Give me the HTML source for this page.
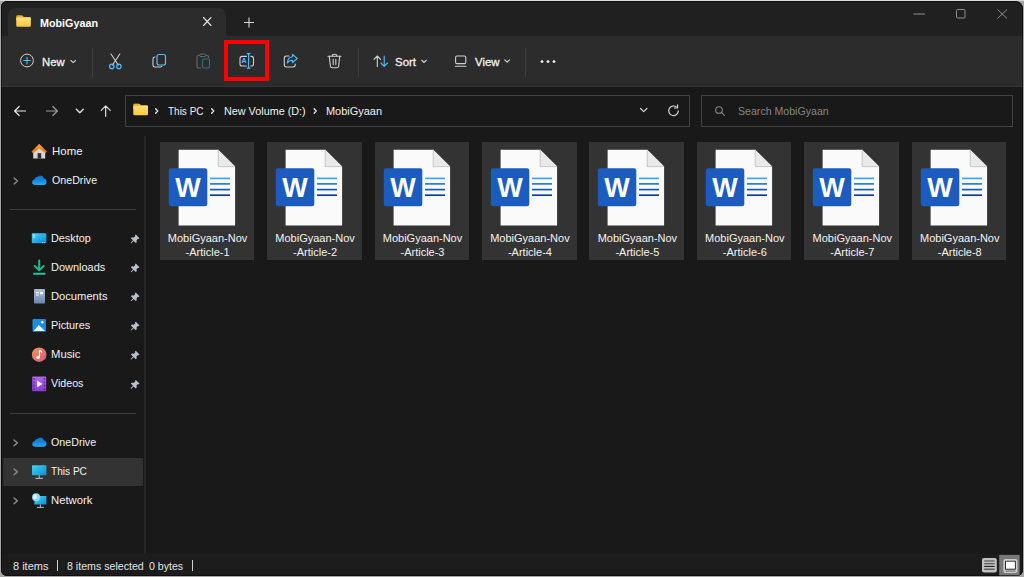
<!DOCTYPE html>
<html lang="en">
<head>
<meta charset="utf-8">
<title>MobiGyaan - File Explorer</title>
<style>
html,body{margin:0;padding:0;}
body{width:1024px;height:577px;overflow:hidden;background:#a6a6a6;position:relative;
 font-family:"Liberation Sans",sans-serif;font-size:11px;color:#f0f0f0;}
*{box-sizing:border-box;}
.a{position:absolute;}
.t{position:absolute;white-space:nowrap;line-height:14px;height:14px;}
#win{left:1.15px;top:1px;width:1021.6px;height:574.8px;background:#191919;border-radius:6px 8px 6px 6px;overflow:hidden;}
#winborder{left:0;top:0;width:100%;height:100%;border:1px solid rgba(0,0,0,0.5);border-radius:6px 8px 6px 6px;}
#topstrip{left:0;top:0;width:1024px;height:1px;background:#dadada;}
#titlebar{left:0;top:0;width:1022px;height:35px;background:#202020;}
#tab{left:7px;top:7px;width:218px;height:28px;background:#2c2c2c;border-radius:7px 7px 0 0;}
#toolbar{left:0;top:35px;width:1022px;height:51px;background:#2c2c2c;border-bottom:1px solid #343434;}
#status{left:0;top:552.5px;width:1022px;height:22px;background:#1c1c1c;}
.sep{position:absolute;background:#3e3e3e;width:1px;}
.item{position:absolute;top:142px;width:94.6px;height:118px;background:#333333;}
.item .l1,.item .l2{position:absolute;left:0;width:96px;text-align:center;line-height:14px;height:14px;font-size:11px;color:#f4f4f4;white-space:nowrap;}
.item .l1{top:88.7px;}
.item .l2{top:102.7px;}
.nav{position:absolute;left:50px;font-size:11px;line-height:14px;height:14px;white-space:nowrap;color:#f2f2f2;}
</style>
</head>
<body>
<div class="a" id="topstrip"></div>
<div class="a" id="win">
  <div class="a" id="titlebar"></div>
  <div class="a" id="tab"></div>
  <div class="a" id="toolbar"></div>
  <div class="a" id="status"></div>
  <div class="a" id="winborder"></div>
</div>

<div class="a" id="ui" style="left:0;top:0;width:1024px;height:577px;">
  <!-- title / tab -->
  <div class="t" id="tabtitle" style="left:40.1px;top:16px;font-weight:bold;font-size:10.5px;color:#fff;transform:scaleX(1.025);transform-origin:0 0;">MobiGyaan</div>
  <!-- toolbar text -->
  <div class="t" id="tnew" style="-webkit-text-stroke:0.3px #f0f0f0;left:42.0px;top:54.7px;transform:scaleX(1.023);transform-origin:0 0;">New</div>
  <div class="t" id="tsort" style="-webkit-text-stroke:0.3px #f0f0f0;left:394.5px;top:54.7px;transform:scaleX(1.042);transform-origin:0 0;">Sort</div>
  <div class="t" id="tview" style="-webkit-text-stroke:0.3px #f0f0f0;left:474.8px;top:54.7px;transform:scaleX(1.035);transform-origin:0 0;">View</div>
  <div class="sep" style="left:92px;top:48px;height:29px;"></div>
  <div class="sep" style="left:357.5px;top:48px;height:29px;"></div>
  <div class="sep" style="left:525px;top:48px;height:29px;"></div>
  <div class="a" id="redbox" style="left:224.3px;top:40.2px;width:44.8px;height:40.4px;border:4.9px solid #fe0000;"></div>
  <!-- address bar -->
  <div class="a" id="addr" style="left:125px;top:95px;width:565px;height:32px;border:1px solid #424242;background:#191919;"></div>
  <div class="a" id="search" style="left:701px;top:95px;width:312px;height:32px;border:1px solid #424242;background:#191919;"></div>
  <div class="t" id="bc1" style="left:167.5px;top:104px;transform:scaleX(0.908);transform-origin:0 0;">This PC</div>
  <div class="t" id="bc2" style="left:223.5px;top:104px;transform:scaleX(0.982);transform-origin:0 0;">New Volume (D:)</div>
  <div class="t" id="bc3" style="left:325.5px;top:104px;transform:scaleX(0.995);transform-origin:0 0;">MobiGyaan</div>
  <div class="t" id="tsearch" style="left:737.8px;top:104px;color:#868686;transform:scaleX(0.963);transform-origin:0 0;">Search MobiGyaan</div>
  <!-- sidebar -->
  <div class="a" style="left:144.2px;top:136px;width:2px;height:418px;background:#252525;"></div>
  <div class="a" style="left:10px;top:209px;width:126px;height:1px;background:#3c3c3c;"></div>
  <div class="a" style="left:10px;top:412.6px;width:126px;height:1px;background:#3c3c3c;"></div>
  <div class="a" id="thispcsel" style="left:3.4px;top:457.5px;width:139.3px;height:28px;background:#333333;"></div>
  <div class="nav" id="n1" style="left:51.5px;top:144px;transform:scaleX(1.041);transform-origin:0 0;">Home</div>
  <div class="nav" id="n2" style="left:51.5px;top:173px;transform:scaleX(0.970);transform-origin:0 0;">OneDrive</div>
  <div class="nav" id="n3" style="left:51.1px;top:231px;transform:scaleX(0.986);transform-origin:0 0;">Desktop</div>
  <div class="nav" id="n4" style="left:51.1px;top:260px;transform:scaleX(0.998);transform-origin:0 0;">Downloads</div>
  <div class="nav" id="n5" style="left:51.1px;top:289px;transform:scaleX(1.016);transform-origin:0 0;">Documents</div>
  <div class="nav" id="n6" style="left:51.1px;top:318px;transform:scaleX(0.986);transform-origin:0 0;">Pictures</div>
  <div class="nav" id="n7" style="left:51.1px;top:347px;transform:scaleX(1.028);transform-origin:0 0;">Music</div>
  <div class="nav" id="n8" style="left:51.1px;top:376px;transform:scaleX(0.971);transform-origin:0 0;">Videos</div>
  <div class="nav" id="n9" style="left:51.4px;top:435px;transform:scaleX(0.972);transform-origin:0 0;">OneDrive</div>
  <div class="nav" id="n10" style="left:51.4px;top:464px;transform:scaleX(0.918);transform-origin:0 0;">This PC</div>
  <div class="nav" id="n11" style="left:51.4px;top:493px;transform:scaleX(1.029);transform-origin:0 0;">Network</div>
  <!-- status -->
  <div class="t" id="s1" style="left:13.3px;top:559px;color:#e4e4e4;transform:scaleX(0.998);transform-origin:0 0;">8 items</div>
  <div class="a" style="left:57px;top:560px;width:1px;height:11px;background:#d0d0d0;"></div>
  <div class="t" id="s2" style="left:67.0px;top:559px;color:#e4e4e4;transform:scaleX(0.966);transform-origin:0 0;">8 items selected</div>
  <div class="t" id="s3" style="left:149.2px;top:559px;color:#e4e4e4;transform:scaleX(0.960);transform-origin:0 0;">0 bytes</div>
  <div class="a" style="left:192px;top:560px;width:1px;height:11px;background:#d0d0d0;"></div>
<svg class="a" id="icons" style="left:0;top:0;" width="1024" height="577" viewBox="0 0 1024 577">
  <defs>
    <linearGradient id="gfold" x1="0" y1="0" x2="0" y2="1"><stop offset="0" stop-color="#ffe07a"/><stop offset="1" stop-color="#fbc83a"/></linearGradient>
    <symbol id="folder" viewBox="0 0 16 13">
      <path d="M0.3 1.6 Q0.3 0.2 1.6 0.2 H5.6 Q6.4 0.2 7 0.8 L8.3 2 H14.5 Q15.6 2 15.6 3.1 V6 H0.3 Z" fill="#f0b017"/>
      <path d="M0.3 3.6 Q0.3 2.6 1.3 2.6 H14.6 Q15.6 2.6 15.6 3.6 V11.3 Q15.6 12.4 14.5 12.4 H1.4 Q0.3 12.4 0.3 11.3 Z" fill="url(#gfold)"/>
    </symbol>
    <symbol id="chevd" viewBox="0 0 8 5"><path d="M1 1 L4 4 L7 1" fill="none" stroke="#d4d4d4" stroke-width="1.4" stroke-linecap="round" stroke-linejoin="round"/></symbol>
    <symbol id="chevr" viewBox="0 0 5 8"><path d="M1.3 1.4 L3.7 4 L1.3 6.6" fill="none" stroke="currentColor" stroke-width="1.6" stroke-linecap="round" stroke-linejoin="round"/></symbol>
    <symbol id="pin" viewBox="0 0 10 10"><path d="M5.6 0.5 L9.5 4.4 L8.6 5.3 L7.9 4.9 L6.4 6.4 L6.6 8.5 L5.6 9.5 L3.4 7.3 L0.7 9.9 L0.1 9.3 L2.7 6.6 L0.5 4.4 L1.5 3.4 L3.6 3.6 L5.1 2.1 L4.7 1.4 Z" fill="#b9c0c8"/></symbol>
  </defs>
  <!-- tab -->
  <path d="M225.4 36 H230 Q225.4 36 225.4 31.5 Z" fill="#2c2c2c"/>
  <use href="#folder" x="16" y="15" width="15.2" height="12.4"/>
  <path d="M203.5 17.5 L211 25.5 M211 17.5 L203.5 25.5" stroke="#e6e6e6" stroke-width="1.1" fill="none" stroke-linecap="round"/>
  <path d="M244 22.5 H254 M249 17.5 V27.5" stroke="#d8d8d8" stroke-width="1.1" fill="none"/>
  <!-- window controls -->
  <path d="M913.5 14 H925" stroke="#8f8f8f" stroke-width="1" fill="none"/>
  <rect x="956.5" y="9.5" width="8.5" height="8.5" rx="1" fill="none" stroke="#8f8f8f" stroke-width="1"/>
  <path d="M997.5 9.5 L1007 18.5 M1007 9.5 L997.5 18.5" stroke="#8f8f8f" stroke-width="1" fill="none"/>
  <!-- toolbar: New -->
  <circle cx="27" cy="60.5" r="6.4" fill="none" stroke="#cfcfcf" stroke-width="1"/>
  <path d="M23.7 60.5 H30.3 M27 57.2 V63.8" stroke="#4cc2ff" stroke-width="1.1" fill="none" stroke-linecap="round"/>
  <use href="#chevd" x="70" y="59.5" width="6.4" height="4"/>
  <!-- cut -->
  <g fill="none" stroke-linecap="round">
    <path d="M111 54 L118.3 65 M119.8 54 L112.5 65" stroke="#d0d0d0" stroke-width="1.1"/>
    <circle cx="111.8" cy="66.4" r="2.2" stroke="#4cc2ff" stroke-width="1.2"/>
    <circle cx="118.9" cy="66.4" r="2.2" stroke="#4cc2ff" stroke-width="1.2"/>
  </g>
  <!-- copy -->
  <g fill="none">
    <path d="M155.5 57 H154.7 Q153 57 153 58.7 V65.3 Q153 67 154.7 67 H160.3 Q162 67 162 65.8" stroke="#d0d0d0" stroke-width="1.1"/>
    <rect x="157" y="54.5" width="8.5" height="10.5" rx="2" stroke="#4cc2ff" stroke-width="1.2"/>
  </g>
  <!-- paste (disabled) -->
  <g fill="none">
    <path d="M199.5 55.5 H198.5 Q197 55.5 197 57 V66.5 Q197 68 198.5 68 H201" stroke="#6a6a6a" stroke-width="1.1"/>
    <path d="M206 55.5 H207 Q208.5 55.5 208.5 57 V58" stroke="#6a6a6a" stroke-width="1.1"/>
    <rect x="199.7" y="54" width="6" height="2.6" rx="1.2" stroke="#6a6a6a" stroke-width="1"/>
    <rect x="202.5" y="59" width="7" height="9" rx="1.4" stroke="#2f6f93" stroke-width="1.1"/>
  </g>
  <!-- rename -->
  <g fill="none">
    <path d="M250.4 56.4 H251.4 Q253.5 56.4 253.5 58.5 V63.9 Q253.5 66 251.4 66 H250.4 M246.8 66 H242.1 Q240 66 240 63.9 V58.5 Q240 56.4 242.1 56.4 H246.8" stroke="#cfcfcf" stroke-width="1.1"/>
    <path d="M248.6 53.7 V68 M247.2 53.6 H250 M247.2 68.1 H250" stroke="#4cc2ff" stroke-width="1.1" stroke-linecap="round"/>
    <text x="244.15" y="63.3" text-anchor="middle" font-family="Liberation Sans, sans-serif" font-size="7" font-weight="bold" fill="#4cc2ff" stroke="none">A</text>
  </g>
  <!-- share -->
  <g fill="none">
    <path d="M289 56 H286.5 Q284.3 56 284.3 58.2 V64.8 Q284.3 67 286.5 67 H293 Q295.2 67 295.2 64.8 V64" stroke="#cfcfcf" stroke-width="1.1" stroke-linecap="round"/>
    <path d="M292.5 54.3 L297.3 58.5 L292.5 62.7 V60.4 Q289 60.2 287.3 63 Q287.6 57.4 292.5 56.7 Z" stroke="#4cc2ff" stroke-width="1.1" stroke-linejoin="round"/>
  </g>
  <!-- delete -->
  <g fill="none" stroke="#cfcfcf" stroke-width="1.1" stroke-linecap="round">
    <path d="M328 56.2 H341"/>
    <path d="M332.2 56 Q332.2 54.2 334.5 54.2 Q336.8 54.2 336.8 56"/>
    <path d="M329.3 56.4 L330.4 66.2 Q330.6 67.8 332.2 67.8 H336.8 Q338.4 67.8 338.6 66.2 L339.7 56.4"/>
    <path d="M333.2 59.2 V64.6 M335.8 59.2 V64.6"/>
  </g>
  <!-- sort -->
  <g fill="none" stroke-width="1.1" stroke-linecap="round" stroke-linejoin="round">
    <path d="M377.3 66.4 V56.2 M374 59.4 L377.3 56 L380.6 59.4" stroke="#cfcfcf"/>
    <path d="M384.2 56 V66.2 M380.9 63 L384.2 66.4 L387.5 63" stroke="#4cc2ff"/>
  </g>
  <use href="#chevd" x="420.8" y="59.3" width="6.4" height="4"/>
  <!-- view -->
  <g fill="none" stroke="#cfcfcf" stroke-width="1.1" stroke-linecap="round">
    <rect x="455.6" y="56" width="10.2" height="7.6" rx="1.4"/>
    <path d="M455.4 66.3 H466"/>
  </g>
  <use href="#chevd" x="503.9" y="59" width="6.4" height="4"/>
  <!-- more -->
  <circle cx="542" cy="61.6" r="1.45" fill="#f0f0f0"/><circle cx="548" cy="61.6" r="1.45" fill="#f0f0f0"/><circle cx="554" cy="61.6" r="1.45" fill="#f0f0f0"/>
  <!-- nav arrows -->
  <g fill="none" stroke-width="1.2" stroke-linecap="round" stroke-linejoin="round">
    <path d="M25.5 111 H14.8 M19.2 106.5 L14.6 111 L19.2 115.5" stroke="#e8e8e8"/>
    <path d="M46.5 111 H57.2 M52.8 106.5 L57.4 111 L52.8 115.5" stroke="#9d9d9d"/>
    <path d="M76.3 109.3 L79.8 112.8 L83.3 109.3" stroke="#e0e0e0" stroke-width="1.4"/>
    <path d="M105.7 116.3 V106 M101.2 110.3 L105.7 105.8 L110.2 110.3" stroke="#e0e0e0"/>
  </g>
  <!-- address bar -->
  <use href="#folder" x="133" y="103.3" width="15.4" height="12.6"/>
  <g color="#e0e0e0">
    <use href="#chevr" x="154.5" y="107.5" width="4.4" height="7"/>
    <use href="#chevr" x="210.5" y="107.5" width="4.4" height="7"/>
    <use href="#chevr" x="313" y="107.5" width="4.4" height="7"/>
  </g>
  <path d="M640.5 108.5 L643.7 111.7 L646.9 108.5" fill="none" stroke="#d0d0d0" stroke-width="1.2" stroke-linecap="round" stroke-linejoin="round"/>
  <g fill="none" stroke="#d0d0d0" stroke-width="1.2" stroke-linecap="round" stroke-linejoin="round">
    <path d="M678.3 110.8 A4.8 4.8 0 1 1 676.4 107"/>
    <path d="M677.6 104.8 V108 H674.4"/>
  </g>
  <g fill="none" stroke="#848484" stroke-width="1.15" stroke-linecap="round">
    <circle cx="719" cy="110" r="3.3"/><path d="M721.5 112.5 L724.3 115.4"/>
  </g>
    <defs>
    <linearGradient id="gcloud" x1="0" y1="0" x2="0" y2="1"><stop offset="0" stop-color="#0f6fd0"/><stop offset="0.55" stop-color="#1488de"/><stop offset="1" stop-color="#2aa9ec"/></linearGradient>
    <linearGradient id="gdesk" x1="0" y1="0" x2="1" y2="1"><stop offset="0" stop-color="#56d6f2"/><stop offset="0.5" stop-color="#26aee6"/><stop offset="1" stop-color="#1682d0"/></linearGradient>
    <linearGradient id="gdoc" x1="0" y1="0" x2="0" y2="1"><stop offset="0" stop-color="#a9bcd6"/><stop offset="1" stop-color="#6b86ac"/></linearGradient>
    <linearGradient id="gmus" x1="0" y1="0" x2="1" y2="1"><stop offset="0" stop-color="#f59a55"/><stop offset="1" stop-color="#d2567f"/></linearGradient>
    <linearGradient id="gvid" x1="0" y1="0" x2="0" y2="1"><stop offset="0" stop-color="#b066f2"/><stop offset="1" stop-color="#8a3ad6"/></linearGradient>
    <linearGradient id="gpc" x1="0" y1="0" x2="1" y2="1"><stop offset="0" stop-color="#4fd6ee"/><stop offset="0.5" stop-color="#27b2e4"/><stop offset="1" stop-color="#1686d2"/></linearGradient>
    <symbol id="cloud" viewBox="0 0 15 10"><path d="M3.4 9.8 Q0.2 9.8 0.2 7 Q0.2 4.6 2.6 4.2 Q3.4 1.4 6 1.6 Q7.2 0 9.2 0.3 Q11.8 0.7 12.2 3.4 Q14.9 3.8 14.9 6.6 Q14.9 9.8 11.8 9.8 Z" fill="url(#gcloud)"/></symbol>
    <symbol id="navchev" viewBox="0 0 7 9"><path d="M1.8 1.7 L5.2 4.6 L1.8 7.5" fill="none" stroke="#858585" stroke-width="1.5" stroke-linecap="round" stroke-linejoin="round"/></symbol>
  </defs>
  <!-- Home -->
  <path d="M33.2 151 L39.2 146 L45.2 151 V158.6 H33.2 Z" fill="#d6d6d6"/>
  <rect x="37.6" y="153.2" width="3.6" height="5.4" fill="#2e2e2e"/>
  <path d="M31.5 151.6 L39.2 144.1 L46.9 151.6 L45.5 153.2 L39.2 148.4 L32.9 153.2 Z" fill="#f0821a"/>
  <path d="M35 148.2 L39.2 144.1 L43.4 148.2 L39.2 148.6 Z" fill="#f7972a"/>
  <!-- OneDrive (top) -->
  <use href="#cloud" x="31.8" y="175.2" width="15" height="9.9"/>
  <use href="#navchev" x="12.4" y="176.4" width="7" height="9"/>
  <!-- Desktop -->
  <rect x="31.8" y="233.3" width="14.6" height="9.9" rx="0.8" fill="url(#gdesk)"/>
  <path d="M33.3 235.2 H34.8 M33.3 237.2 H34.8" stroke="#e8fbff" stroke-width="1"/>
  <path d="M42.2 242.6 H43.2 M44.2 242.6 H45.2" stroke="#d8f0ff" stroke-width="0.8"/>
  <!-- Downloads -->
  <g fill="none" stroke="#1fb88f" stroke-width="2" stroke-linecap="round" stroke-linejoin="round">
    <path d="M39.2 260.4 V270 M34.7 266 L39.2 270.4 L43.7 266"/>
    <path d="M34 273.7 H44.6" stroke="#25c79a"/>
  </g>
  <!-- Documents -->
  <rect x="34" y="289" width="11" height="14.6" rx="1" fill="url(#gdoc)"/>
  <path d="M36 292.6 H39 M36 295 H39" stroke="#f2f6fb" stroke-width="1.1"/>
  <rect x="40" y="291.8" width="3" height="2.6" fill="#f2f6fb"/>
  <!-- Pictures -->
  <rect x="32.5" y="319" width="13.4" height="12.8" rx="1" fill="#1d8ce0"/>
  <path d="M33.6 331 L38.8 325 L44.8 331 Z" fill="#ffffff"/>
  <circle cx="42.3" cy="322.3" r="1.2" fill="#ffffff"/>
  <!-- Music -->
  <circle cx="39.2" cy="354.7" r="7.3" fill="url(#gmus)"/>
  <path d="M39.4 350.6 V357.2" stroke="#fff" stroke-width="1.1" fill="none"/>
  <path d="M39.4 350.4 Q41.6 350.8 42 353" stroke="#fff" stroke-width="1.2" fill="none"/>
  <ellipse cx="38.1" cy="357.4" rx="1.8" ry="1.5" fill="#fff"/>
  <!-- Videos -->
  <rect x="32.2" y="376.6" width="14" height="14.6" rx="1" fill="url(#gvid)"/>
  <g fill="#6a2bb0"><rect x="33.2" y="378" width="1.6" height="1.8"/><rect x="33.2" y="381.4" width="1.6" height="1.8"/><rect x="33.2" y="384.8" width="1.6" height="1.8"/><rect x="33.2" y="388.2" width="1.6" height="1.8"/>
  <rect x="43.6" y="378" width="1.6" height="1.8"/><rect x="43.6" y="381.4" width="1.6" height="1.8"/><rect x="43.6" y="384.8" width="1.6" height="1.8"/><rect x="43.6" y="388.2" width="1.6" height="1.8"/></g>
  <path d="M37.2 380.6 L42.4 383.9 L37.2 387.2 Z" fill="#fff"/>
  <!-- pins -->
  <use href="#pin" x="130.4" y="234" width="9.6" height="9.6"/>
  <use href="#pin" x="130.4" y="263" width="9.6" height="9.6"/>
  <use href="#pin" x="130.4" y="292" width="9.6" height="9.6"/>
  <use href="#pin" x="130.4" y="321.2" width="9.6" height="9.6"/>
  <use href="#pin" x="130.4" y="350.2" width="9.6" height="9.6"/>
  <use href="#pin" x="130.4" y="379.4" width="9.6" height="9.6"/>
  <!-- OneDrive (bottom) -->
  <use href="#cloud" x="31.8" y="437.2" width="15.1" height="9.7"/>
  <use href="#navchev" x="12.2" y="438.3" width="7" height="9"/>
  <!-- This PC -->
  <rect x="32" y="465.2" width="14.4" height="10" rx="0.6" fill="url(#gpc)"/>
  <path d="M39.2 475.2 V478.2 M35.4 478.4 H43" stroke="#b8c4cc" stroke-width="1" fill="none"/>
  <use href="#navchev" x="12.2" y="467.3" width="7" height="9"/>
  <!-- Network -->
  <rect x="34.4" y="496" width="12" height="8.6" rx="0.6" fill="url(#gpc)"/>
  <path d="M40.4 504.6 V507.2 M37 507.4 H43.8" stroke="#b8c4cc" stroke-width="1" fill="none"/>
  <circle cx="36.1" cy="497.2" r="4" fill="#8fd4f4"/>
  <path d="M33 495.4 Q35 493.6 37 494.6 Q36 496.6 37.6 497.6 Q36 499.6 34 499.2 Q32.6 497.6 33 495.4 Z" fill="#e8f6fd" opacity="0.85"/>
  <use href="#navchev" x="12.2" y="496.3" width="7" height="9"/>

    <!-- status bar view buttons -->
  <rect x="982" y="558" width="14.8" height="14.4" rx="2" fill="#c2c2c2"/>
  <path d="M984.2 561 H994.6" stroke="#6a6a6a" stroke-width="1.5" fill="none"/>
  <path d="M984.2 563.7 H994.6" stroke="#4a4a4a" stroke-width="1.1" fill="none"/>
  <path d="M984.2 566.4 H994.6" stroke="#1c1c1c" stroke-width="1.1" fill="none"/>
  <path d="M984.2 569.2 H994.6" stroke="#3a3a3a" stroke-width="1.1" fill="none"/>
  <rect x="999.2" y="554.9" width="20.4" height="20.4" fill="#787878"/>
  <rect x="1003.4" y="558.9" width="14.1" height="14.1" rx="2.2" fill="#cdcdcd"/>
  <rect x="1005" y="560.7" width="10.9" height="9" rx="0.6" fill="#303030"/>
  <rect x="1006" y="561.7" width="8.9" height="7" fill="#ffffff"/>
  <path d="M1005.5 571.1 H1015.5" stroke="#555" stroke-width="0.9" fill="none"/>
</svg>

  <!-- files -->
  <div class="item" style="left:159.60px;top:142.3px;"><svg class="a" style="left:0;top:0;" width="96" height="90" viewBox="0 0 96 90"><path d="M18.6 7.7 H58.2 L75.1 24.6 V83.5 H18.6 Z" fill="#fafafa"/><path d="M58.2 7.7 L75.1 24.6 H58.2 Z" fill="#e9e9e9"/><path d="M58.2 7.7 V24.6 H75.1" fill="none" stroke="#bdbdbd" stroke-width="0.8"/><path d="M50 36.4 H70" stroke="#41a5ee" stroke-width="1.7"/><path d="M50 41.9 H70" stroke="#2b7cd3" stroke-width="1.7"/><path d="M50 47.6 H70" stroke="#185abd" stroke-width="1.7"/><path d="M50 53.2 H70" stroke="#103f91" stroke-width="1.7"/><rect x="8.8" y="26.2" width="38.5" height="38" rx="2.2" fill="#1b5cbe"/><text x="28.1" y="55.2" text-anchor="middle" font-family="Liberation Sans, sans-serif" font-weight="bold" font-size="27" fill="#ffffff">W</text></svg><div class="l1">MobiGyaan-Nov</div><div class="l2">-Article-1</div></div>
  <div class="item" style="left:267.05px;top:142.3px;"><svg class="a" style="left:0;top:0;" width="96" height="90" viewBox="0 0 96 90"><path d="M18.6 7.7 H58.2 L75.1 24.6 V83.5 H18.6 Z" fill="#fafafa"/><path d="M58.2 7.7 L75.1 24.6 H58.2 Z" fill="#e9e9e9"/><path d="M58.2 7.7 V24.6 H75.1" fill="none" stroke="#bdbdbd" stroke-width="0.8"/><path d="M50 36.4 H70" stroke="#41a5ee" stroke-width="1.7"/><path d="M50 41.9 H70" stroke="#2b7cd3" stroke-width="1.7"/><path d="M50 47.6 H70" stroke="#185abd" stroke-width="1.7"/><path d="M50 53.2 H70" stroke="#103f91" stroke-width="1.7"/><rect x="8.8" y="26.2" width="38.5" height="38" rx="2.2" fill="#1b5cbe"/><text x="28.1" y="55.2" text-anchor="middle" font-family="Liberation Sans, sans-serif" font-weight="bold" font-size="27" fill="#ffffff">W</text></svg><div class="l1">MobiGyaan-Nov</div><div class="l2">-Article-2</div></div>
  <div class="item" style="left:374.50px;top:142.3px;"><svg class="a" style="left:0;top:0;" width="96" height="90" viewBox="0 0 96 90"><path d="M18.6 7.7 H58.2 L75.1 24.6 V83.5 H18.6 Z" fill="#fafafa"/><path d="M58.2 7.7 L75.1 24.6 H58.2 Z" fill="#e9e9e9"/><path d="M58.2 7.7 V24.6 H75.1" fill="none" stroke="#bdbdbd" stroke-width="0.8"/><path d="M50 36.4 H70" stroke="#41a5ee" stroke-width="1.7"/><path d="M50 41.9 H70" stroke="#2b7cd3" stroke-width="1.7"/><path d="M50 47.6 H70" stroke="#185abd" stroke-width="1.7"/><path d="M50 53.2 H70" stroke="#103f91" stroke-width="1.7"/><rect x="8.8" y="26.2" width="38.5" height="38" rx="2.2" fill="#1b5cbe"/><text x="28.1" y="55.2" text-anchor="middle" font-family="Liberation Sans, sans-serif" font-weight="bold" font-size="27" fill="#ffffff">W</text></svg><div class="l1">MobiGyaan-Nov</div><div class="l2">-Article-3</div></div>
  <div class="item" style="left:481.95px;top:142.3px;"><svg class="a" style="left:0;top:0;" width="96" height="90" viewBox="0 0 96 90"><path d="M18.6 7.7 H58.2 L75.1 24.6 V83.5 H18.6 Z" fill="#fafafa"/><path d="M58.2 7.7 L75.1 24.6 H58.2 Z" fill="#e9e9e9"/><path d="M58.2 7.7 V24.6 H75.1" fill="none" stroke="#bdbdbd" stroke-width="0.8"/><path d="M50 36.4 H70" stroke="#41a5ee" stroke-width="1.7"/><path d="M50 41.9 H70" stroke="#2b7cd3" stroke-width="1.7"/><path d="M50 47.6 H70" stroke="#185abd" stroke-width="1.7"/><path d="M50 53.2 H70" stroke="#103f91" stroke-width="1.7"/><rect x="8.8" y="26.2" width="38.5" height="38" rx="2.2" fill="#1b5cbe"/><text x="28.1" y="55.2" text-anchor="middle" font-family="Liberation Sans, sans-serif" font-weight="bold" font-size="27" fill="#ffffff">W</text></svg><div class="l1">MobiGyaan-Nov</div><div class="l2">-Article-4</div></div>
  <div class="item" style="left:589.40px;top:142.3px;"><svg class="a" style="left:0;top:0;" width="96" height="90" viewBox="0 0 96 90"><path d="M18.6 7.7 H58.2 L75.1 24.6 V83.5 H18.6 Z" fill="#fafafa"/><path d="M58.2 7.7 L75.1 24.6 H58.2 Z" fill="#e9e9e9"/><path d="M58.2 7.7 V24.6 H75.1" fill="none" stroke="#bdbdbd" stroke-width="0.8"/><path d="M50 36.4 H70" stroke="#41a5ee" stroke-width="1.7"/><path d="M50 41.9 H70" stroke="#2b7cd3" stroke-width="1.7"/><path d="M50 47.6 H70" stroke="#185abd" stroke-width="1.7"/><path d="M50 53.2 H70" stroke="#103f91" stroke-width="1.7"/><rect x="8.8" y="26.2" width="38.5" height="38" rx="2.2" fill="#1b5cbe"/><text x="28.1" y="55.2" text-anchor="middle" font-family="Liberation Sans, sans-serif" font-weight="bold" font-size="27" fill="#ffffff">W</text></svg><div class="l1">MobiGyaan-Nov</div><div class="l2">-Article-5</div></div>
  <div class="item" style="left:696.85px;top:142.3px;"><svg class="a" style="left:0;top:0;" width="96" height="90" viewBox="0 0 96 90"><path d="M18.6 7.7 H58.2 L75.1 24.6 V83.5 H18.6 Z" fill="#fafafa"/><path d="M58.2 7.7 L75.1 24.6 H58.2 Z" fill="#e9e9e9"/><path d="M58.2 7.7 V24.6 H75.1" fill="none" stroke="#bdbdbd" stroke-width="0.8"/><path d="M50 36.4 H70" stroke="#41a5ee" stroke-width="1.7"/><path d="M50 41.9 H70" stroke="#2b7cd3" stroke-width="1.7"/><path d="M50 47.6 H70" stroke="#185abd" stroke-width="1.7"/><path d="M50 53.2 H70" stroke="#103f91" stroke-width="1.7"/><rect x="8.8" y="26.2" width="38.5" height="38" rx="2.2" fill="#1b5cbe"/><text x="28.1" y="55.2" text-anchor="middle" font-family="Liberation Sans, sans-serif" font-weight="bold" font-size="27" fill="#ffffff">W</text></svg><div class="l1">MobiGyaan-Nov</div><div class="l2">-Article-6</div></div>
  <div class="item" style="left:804.30px;top:142.3px;"><svg class="a" style="left:0;top:0;" width="96" height="90" viewBox="0 0 96 90"><path d="M18.6 7.7 H58.2 L75.1 24.6 V83.5 H18.6 Z" fill="#fafafa"/><path d="M58.2 7.7 L75.1 24.6 H58.2 Z" fill="#e9e9e9"/><path d="M58.2 7.7 V24.6 H75.1" fill="none" stroke="#bdbdbd" stroke-width="0.8"/><path d="M50 36.4 H70" stroke="#41a5ee" stroke-width="1.7"/><path d="M50 41.9 H70" stroke="#2b7cd3" stroke-width="1.7"/><path d="M50 47.6 H70" stroke="#185abd" stroke-width="1.7"/><path d="M50 53.2 H70" stroke="#103f91" stroke-width="1.7"/><rect x="8.8" y="26.2" width="38.5" height="38" rx="2.2" fill="#1b5cbe"/><text x="28.1" y="55.2" text-anchor="middle" font-family="Liberation Sans, sans-serif" font-weight="bold" font-size="27" fill="#ffffff">W</text></svg><div class="l1">MobiGyaan-Nov</div><div class="l2">-Article-7</div></div>
  <div class="item" style="left:911.75px;top:142.3px;"><svg class="a" style="left:0;top:0;" width="96" height="90" viewBox="0 0 96 90"><path d="M18.6 7.7 H58.2 L75.1 24.6 V83.5 H18.6 Z" fill="#fafafa"/><path d="M58.2 7.7 L75.1 24.6 H58.2 Z" fill="#e9e9e9"/><path d="M58.2 7.7 V24.6 H75.1" fill="none" stroke="#bdbdbd" stroke-width="0.8"/><path d="M50 36.4 H70" stroke="#41a5ee" stroke-width="1.7"/><path d="M50 41.9 H70" stroke="#2b7cd3" stroke-width="1.7"/><path d="M50 47.6 H70" stroke="#185abd" stroke-width="1.7"/><path d="M50 53.2 H70" stroke="#103f91" stroke-width="1.7"/><rect x="8.8" y="26.2" width="38.5" height="38" rx="2.2" fill="#1b5cbe"/><text x="28.1" y="55.2" text-anchor="middle" font-family="Liberation Sans, sans-serif" font-weight="bold" font-size="27" fill="#ffffff">W</text></svg><div class="l1">MobiGyaan-Nov</div><div class="l2">-Article-8</div></div>
    </div>
</body>
</html>
